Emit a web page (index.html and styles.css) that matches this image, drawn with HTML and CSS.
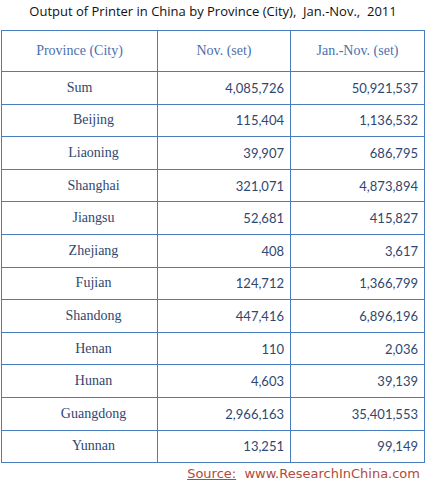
FILE: index.html
```html
<!DOCTYPE html>
<html>
<head>
<meta charset="utf-8">
<link rel="stylesheet" href="styles.css">
</head>
<body>
<div class="page">
  <div class="title">Output of Printer in China by Province (City),&nbsp; Jan.-Nov.,&nbsp; 2011</div>
  <table class="grid">
    <thead>
      <tr><th>Province (City)</th><th>Nov. (set)</th><th>Jan.-Nov. (set)</th></tr>
    </thead>
    <tbody>
      <tr><td class="name sum">Sum</td><td class="num">4,085,726</td><td class="num">50,921,537</td></tr>
      <tr><td class="name">Beijing</td><td class="num">115,404</td><td class="num">1,136,532</td></tr>
      <tr><td class="name">Liaoning</td><td class="num">39,907</td><td class="num">686,795</td></tr>
      <tr><td class="name">Shanghai</td><td class="num">321,071</td><td class="num">4,873,894</td></tr>
      <tr><td class="name">Jiangsu</td><td class="num">52,681</td><td class="num">415,827</td></tr>
      <tr><td class="name">Zhejiang</td><td class="num">408</td><td class="num">3,617</td></tr>
      <tr><td class="name">Fujian</td><td class="num">124,712</td><td class="num">1,366,799</td></tr>
      <tr><td class="name">Shandong</td><td class="num">447,416</td><td class="num">6,896,196</td></tr>
      <tr><td class="name">Henan</td><td class="num">110</td><td class="num">2,036</td></tr>
      <tr><td class="name">Hunan</td><td class="num">4,603</td><td class="num">39,139</td></tr>
      <tr><td class="name">Guangdong</td><td class="num">2,966,163</td><td class="num">35,401,553</td></tr>
      <tr><td class="name">Yunnan</td><td class="num">13,251</td><td class="num">99,149</td></tr>
    </tbody>
  </table>
  <div class="source"><span class="src-label">Source:</span>&nbsp; www.ResearchInChina.com</div>
</div>
</body>
</html>
```
FILE: styles.css
```css
html, body {
  margin: 0;
  padding: 0;
  background: #ffffff;
}
.page {
  width: 426px;
  height: 481px;
  overflow: hidden;
}
.title {
  height: 30px;
  box-sizing: border-box;
  padding-top: 2px;
  text-align: center;
  font-family: "Open Sans", sans-serif;
  font-size: 13px;
  color: #111111;
  line-height: 18px;
}
.grid {
  margin-left: 1px;
  border-collapse: collapse;
  table-layout: fixed;
  width: 424px;
}
.grid th, .grid td {
  border: 1px solid #4a7cc0;
  padding: 0;
}
.grid th {
  height: 40px;
  font-family: "Liberation Serif", serif;
  font-weight: normal;
  font-size: 14px;
  color: #4b6fae;
  text-align: center;
}
.grid th:nth-child(1), .grid td:nth-child(1) { width: 155px; }
.grid th:nth-child(2), .grid td:nth-child(2) { width: 132px; }
.grid td {
  height: 31.6px;
  color: #2f4770;
}
.name {
  font-family: "Liberation Serif", serif;
  font-size: 14px;
  text-align: center;
  padding-left: 28px !important;
}
.name.sum {
  padding-left: 0 !important;
}
.num {
  font-family: "Lato", sans-serif;
  font-size: 13px;
  text-align: right;
  padding-right: 6px !important;
}
.source {
  text-align: right;
  padding-right: 6px;
  padding-top: 3px;
  font-family: "DejaVu Sans", sans-serif;
  font-size: 13px;
  color: #b24a3a;
}
.src-label {
  text-decoration: underline;
}
```
